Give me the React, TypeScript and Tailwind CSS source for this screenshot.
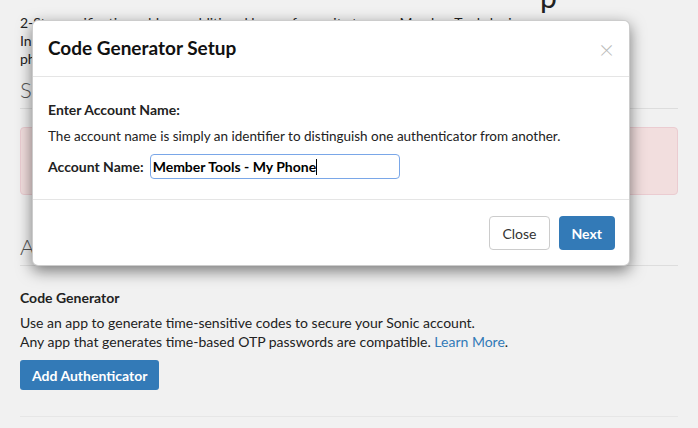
export default function App() {
  return (
    <div className="relative h-[428px] w-[698px] overflow-hidden bg-[#f1f1f1] font-[Lato,_sans-serif] text-[14px] text-[#222]">
      {/* page behind the dialog */}
      <div className="px-5">
        <div className="-mt-[22px] h-[36px] pl-[520px] text-[30px] leading-[36px]">p</div>
        <p className="leading-[18px]">2-Step verification adds an additional layer of security to your Member Tools login.</p>
        <p className="leading-[18px]">In order to use 2-Step verification you will need an authenticator app installed on your</p>
        <p className="leading-[18px]">phone.</p>
        <h2 className="mt-[8px] border-b border-[#ddd] pb-[4px] text-[22px] font-light leading-[28px] text-[#555]">Security Keys</h2>
        <div className="mt-[18px] h-[68px] rounded border border-[#ebccd1] bg-[#f2dede]" />
        <h2 className="mt-[38px] border-b border-[#ddd] pb-[4px] text-[22px] font-light leading-[28px] text-[#555]">Authenticators</h2>
        <h3 className="mt-[22px] text-[14px] font-bold leading-[20px]">Code Generator</h3>
        <p className="mt-[5px] leading-[19px]">Use an app to generate time-sensitive codes to secure your Sonic account.</p>
        <p className="leading-[19px]">
          Any app that generates time-based OTP passwords are compatible.{' '}
          <span className="text-[#337ab7]">Learn More</span>.
        </p>
        <button className="mt-[9px] h-[30px] rounded-[3px] bg-[#337ab7] px-3 text-[14px] font-bold text-white">Add Authenticator</button>
        <div className="mt-[26px] border-b border-[#e6e6e6]" />
      </div>

      {/* dialog */}
      <div className="absolute left-[32px] top-[20px] w-[598px] rounded-md border border-black/20 bg-white shadow-[0_5px_15px_rgba(0,0,0,0.5)]">
        <div className="flex h-[56px] items-center justify-between border-b border-[#e5e5e5] px-[15px]">
          <h1 className="text-[19px] font-bold text-[#111]">Code Generator Setup</h1>
          <span className="text-[26px] font-light leading-none text-[#bbb]">×</span>
        </div>
        <div className="px-[15px] pb-[20px] pt-[23px]">
          <h4 className="text-[14px] font-bold leading-[20px]">Enter Account Name:</h4>
          <p className="mt-[7px] text-[13.5px] leading-[19px]">The account name is simply an identifier to distinguish one authenticator from another.</p>
          <div className="mt-[8px] flex items-center gap-[6px]">
            <label className="font-bold">Account Name:</label>
            <div className="flex h-[25px] w-[250px] items-center rounded-sm border border-[#7aa7e8] px-[2px] font-bold text-black">
              Member Tools - My Phone<span className="h-[16px] w-px bg-black" />
            </div>
          </div>
        </div>
        <div className="flex justify-end gap-[9px] border-t border-[#e5e5e5] px-[14px] pb-[15px] pt-[16px]">
          <button className="h-[34px] rounded border border-[#ccc] bg-white px-[12px] text-[14px] text-[#333]">Close</button>
          <button className="h-[34px] rounded bg-[#337ab7] px-[13px] text-[14px] font-bold text-white">Next</button>
        </div>
      </div>
    </div>
  );
}
